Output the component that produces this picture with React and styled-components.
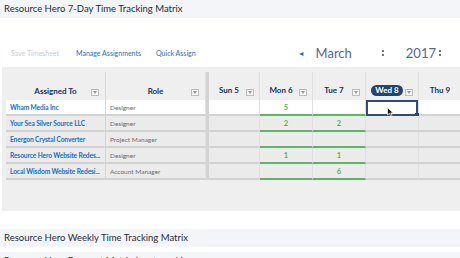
import React from 'react';
import styled, { createGlobalStyle } from 'styled-components';

const GlobalStyle = createGlobalStyle`
  html, body {
    margin: 0;
    padding: 0;
    background: #fff;
    overflow: hidden;
  }
  body {
    font-family: Lato, "Open Sans", sans-serif;
  }
`;

// Style
const Page = styled.div`
  width: 460px;
  height: 258px;
  overflow: hidden;
  display: flex;
  flex-direction: column;
`;

const SectionBar = styled.div`
  height: 18px;
  flex-shrink: 0;
  background: #f3f5f8;
  color: #1f2d3d;
  font-size: 9.5px;
  line-height: 18px;
  padding-left: 4px;
  margin-top: ${(p) => p.$mt || 0}px;
  white-space: nowrap;
`;

const Toolbar = styled.div`
  display: flex;
  align-items: center;
  height: 16px;
  margin-top: 27px;
  padding-left: 11px;
`;

const ToolLink = styled.span`
  font-size: 7px;
  color: ${(p) => (p.$disabled ? '#c9ced6' : '#1b6fc4')};
  margin-right: ${(p) => p.$mr || 0}px;
  white-space: nowrap;
`;

const DatePicker = styled.div`
  display: flex;
  align-items: center;
  margin-left: auto;
  padding-right: 19px;
  color: #54698d;
`;

const PrevArrow = styled.span`
  color: #1b6fc4;
  font-size: 7px;
  margin-right: 11px;
`;

const PickerValue = styled.span`
  font-size: 13px;
  margin-right: ${(p) => p.$mr}px;
`;

const Spinner = styled.span`
  display: flex;
  flex-direction: column;
  gap: 2px;
  margin-right: ${(p) => p.$mr || 0}px;
  & > i {
    display: block;
    width: 2px;
    height: 2px;
    border-radius: 1px;
    background: #3b4a5c;
  }
`;

const GridArea = styled.div`
  margin: 6px 0 0 2px;
  height: 144px;
  box-sizing: border-box;
  background: #efefef;
  padding: 5px 0 0 4px;
  overflow: hidden;
  flex-shrink: 0;
`;

const Matrix = styled.div`
  display: grid;
  grid-template-columns: 100px 100px 3px 51px 53px 53px 53px 53px;
  grid-template-rows: 28px repeat(5, 16px);
  width: 466px;
`;

const HeadCell = styled.div`
  display: flex;
  align-items: flex-end;
  justify-content: center;
  position: relative;
  padding-bottom: 4px;
  box-sizing: border-box;
  border-right: 1px solid ${(p) => (p.$strong ? '#d6d6d6' : '#dedede')};
  font-size: 8px;
  font-weight: 700;
  color: #16325c;
`;

const HeadLabel = styled.span`
  display: inline-block;
  padding: 1px 4px;
  line-height: 9px;
  margin-right: ${(p) => p.$mr || 0}px;
  border-radius: 6px;
  background: ${(p) => (p.$today ? '#1f4670' : 'transparent')};
  color: ${(p) => (p.$today ? '#fff' : '#16325c')};
`;

const FilterBtn = styled.span`
  position: absolute;
  right: ${(p) => p.$r}px;
  bottom: 4px;
  width: 8px;
  height: 7px;
  box-sizing: border-box;
  border: 1px solid #bcbcbc;
  background: #f7f7f7;
  display: flex;
  align-items: center;
  justify-content: center;
`;

const Divider = styled.div`
  background: #d3d3d3;
`;

const Cell = styled.div`
  position: relative;
  box-sizing: border-box;
  display: flex;
  align-items: center;
  justify-content: ${(p) => (p.$center ? 'center' : 'flex-start')};
  padding-left: ${(p) => (p.$center ? 0 : 4)}px;
  background: ${(p) => (p.$first ? '#fff' : '#ebebeb')};
  border-bottom: 2px solid ${(p) => (p.$green ? '#5cb85c' : '#d2d2d2')};
  border-right: 1px solid ${(p) => (p.$strong ? '#d6d6d6' : '#e0e0e0')};
  white-space: nowrap;
  min-width: 0;
`;

const ProjectName = styled.span`
  font-size: 6.6px;
  letter-spacing: -0.1px;
  font-weight: 700;
  color: #1670c6;
`;

const RoleName = styled.span`
  font-size: 6.5px;
  color: #6b6b6b;
`;

const Hours = styled.span`
  font-size: 7.5px;
  font-weight: 700;
  color: #56b356;
`;

const Selection = styled.div`
  position: absolute;
  inset: 0 0 -2px 0;
  border: 2px solid #2c4d75;
  box-sizing: border-box;
  &::after {
    content: '';
    position: absolute;
    right: -3px;
    bottom: -3px;
    width: 4px;
    height: 4px;
    background: #2c4d75;
  }
`;

const Pointer = styled.svg`
  position: absolute;
  left: 21px;
  top: 7px;
`;

const FilterIcon = () => (
  <svg width="4" height="3" viewBox="0 0 4 3">
    <path d="M0 0 H4 L2 3 Z" fill="#9a9a9a" />
  </svg>
);

const days = ['Sun 5', 'Mon 6', 'Tue 7', 'Wed 8', 'Thu 9'];

const rows = [
  { name: 'Wham Media Inc', role: 'Designer', hours: ['', '5', '', '', ''] },
  { name: 'Your Sea Silver Source LLC', role: 'Designer', hours: ['', '2', '2', '', ''] },
  { name: 'Energon Crystal Converter', role: 'Project Manager', hours: ['', '', '', '', ''] },
  { name: 'Resource Hero Website Redes...', role: 'Designer', hours: ['', '1', '1', '', ''] },
  { name: 'Local Wisdom Website Redesi...', role: 'Account Manager', hours: ['', '', '6', '', ''] },
];

const App = () => {
  return (
    <Page>
      <GlobalStyle />
      <SectionBar>Resource Hero 7-Day Time Tracking Matrix</SectionBar>

      <Toolbar>
        <ToolLink $disabled $mr={17}>Save Timesheet</ToolLink>
        <ToolLink $mr={15}>Manage Assignments</ToolLink>
        <ToolLink>Quick Assign</ToolLink>
        <DatePicker>
          <PrevArrow>◄</PrevArrow>
          <PickerValue $mr={30}>March</PickerValue>
          <Spinner $mr={22}><i /><i /></Spinner>
          <PickerValue $mr={3}>2017</PickerValue>
          <Spinner><i /><i /></Spinner>
        </DatePicker>
      </Toolbar>

      <GridArea>
        <Matrix>
          <HeadCell $strong>
            Assigned To
            <FilterBtn $r={6}><FilterIcon /></FilterBtn>
          </HeadCell>
          <HeadCell>
            Role
            <FilterBtn $r={6}><FilterIcon /></FilterBtn>
          </HeadCell>
          <Divider />
          {days.map((d, i) => (
            <HeadCell key={d}>
              <HeadLabel $today={i === 3} $mr={10}>{d}</HeadLabel>
              {i < 4 && <FilterBtn $r={5}><FilterIcon /></FilterBtn>}
            </HeadCell>
          ))}

          {rows.map((r, ri) => (
            <React.Fragment key={r.name}>
              <Cell $first={ri === 0} $strong>
                <ProjectName>{r.name}</ProjectName>
              </Cell>
              <Cell $first={ri === 0}>
                <RoleName>{r.role}</RoleName>
              </Cell>
              <Divider />
              {r.hours.map((h, di) => (
                <Cell key={di} $center $first={ri === 0} $green={di === 1 || di === 2}>
                  {h && <Hours>{h}</Hours>}
                  {ri === 0 && di === 3 && (
                    <>
                      <Selection />
                      <Pointer width="7" height="10" viewBox="0 0 7 10">
                        <path d="M0.5 0.5 V8 L2.4 6.3 L3.8 9.4 L5 8.9 L3.7 5.9 H6.2 Z" fill="#111" stroke="#fff" strokeWidth="0.7" />
                      </Pointer>
                    </>
                  )}
                </Cell>
              ))}
            </React.Fragment>
          ))}
        </Matrix>
      </GridArea>

      <SectionBar $mt={18}>Resource Hero Weekly Time Tracking Matrix</SectionBar>
      <SectionBar $mt={5}>Resource Hero Forecast Matrix (next week)</SectionBar>
    </Page>
  );
};

export default App;
